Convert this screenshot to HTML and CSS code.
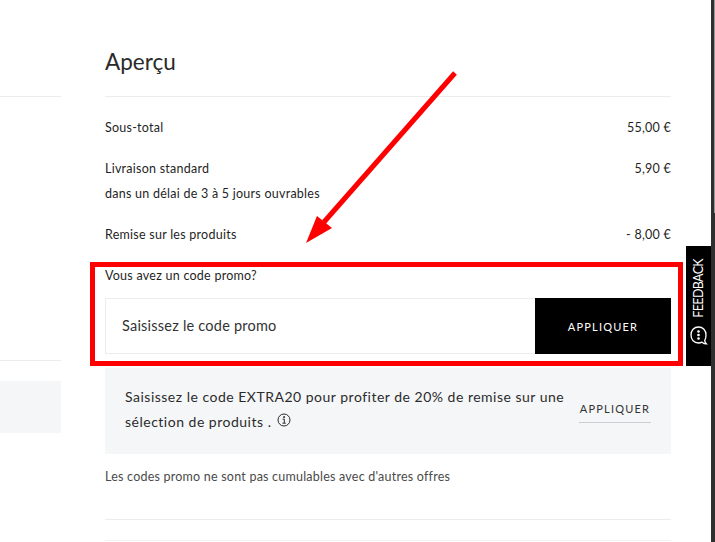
FILE: index.html
```html
<!DOCTYPE html>
<html lang="fr">
<head>
<meta charset="utf-8">
<title>Aperçu</title>
<link rel="stylesheet" href="styles.css">
</head>
<body>
<div class="page">
  <aside class="left">
    <div class="left-rule-a"></div>
    <div class="left-rule-b"></div>
    <div class="left-block"></div>
  </aside>
  <main class="summary">
    <h1 class="title">Aperçu</h1>
    <div class="rows">
      <div class="row row-first"><span>Sous-total</span><span>55,00 €</span></div>
      <div class="row row-ship"><div><div>Livraison standard</div><div class="delay">dans un délai de 3 à 5 jours ouvrables</div></div><span>5,90 €</span></div>
      <div class="row row-disc"><span>Remise sur les produits</span><span>- 8,00 €</span></div>
    </div>
    <p class="promo-label">Vous avez un code promo?</p>
    <form class="promo-form">
      <div class="promo-input">Saisissez le code promo</div>
      <button class="promo-btn" type="button">APPLIQUER</button>
    </form>
    <div class="offer">
      <p class="offer-text">Saisissez le code EXTRA20 pour profiter de 20% de remise sur une sélection de produits .
        <svg class="info" viewBox="0 0 14 14" width="14" height="14" aria-hidden="true"><circle cx="7" cy="7" r="6" fill="none" stroke="#2b2b2b" stroke-width="1"/><path d="M5.600 6.200H7.300V10M5.400 10.200H8.800M6.600 3.600H7.600V4.600H6.600Z" fill="none" stroke="#2b2b2b" stroke-width="1"/></svg>
      </p>
      <a class="offer-link">APPLIQUER</a>
    </div>
    <p class="note">Les codes promo ne sont pas cumulables avec d'autres offres</p>
    <div class="end-rule-a"></div>
    <div class="end-rule-b"></div>
  </main>
  <div class="scrollbar"><div class="thumb"></div></div>
</div>

<svg class="arrow" width="170" height="190" viewBox="0 0 170 190" aria-hidden="true">
  <path d="M155 13 L24 162" fill="none" stroke="#ff0000" stroke-width="5"/>
  <path d="M6 183 L17 156 L32 168 Z" fill="#ff0000"/>
</svg>
<div class="highlight"></div>
<div class="feedback">
  <span class="feedback-text">FEEDBACK</span>
  <svg class="feedback-icon" width="18" height="20" viewBox="0 0 18 20" aria-hidden="true"><path d="M8.500 1C4 1 1 4.300 1 9s3 8 7.500 8c1.300 0 2.500-.3 3.500-.8 1.200 1 2.700 1.700 4.500 1.700-1-.9-1.700-2.100-1.800-3.300C15.500 13 16 11.200 16 9 16 4.300 13 1 8.500 1Z" fill="none" stroke="#fff" stroke-width="1.300"/><circle cx="8.500" cy="5.500" r="1.300" fill="#fff"/><circle cx="8.500" cy="9" r="1.300" fill="#fff"/><circle cx="8.500" cy="12.500" r="1.300" fill="#fff"/></svg>
</div>
</body>
</html>
```

FILE: styles.css
```css
* { box-sizing: border-box; }
html, body { margin: 0; padding: 0; height: 542px; overflow: hidden; background: #fff; }
body { font-family: "Lato", "Open Sans", sans-serif; color: #1f1f1f; position: relative; }
.page { display: flex; width: 715px; height: 542px; overflow: hidden; }
.left { width: 61px; flex: none; padding-top: 96px; }
.left-rule-a { height: 1px; background: #ececec; }
.left-rule-b { height: 1px; background: #ececec; margin-top: 263px; }
.left-block { height: 52px; background: #f5f6f8; margin-top: 20px; }
.summary { width: 566px; margin-left: 44px; flex: none; }
.title { margin: 0; height: 97px; padding-top: 48px; font-size: 22.500px; line-height: 28px; font-weight: 400; color: #2a2a2a; border-bottom: 1px solid #ececec; }
.rows { font-size: 12.500px; line-height: 25px; letter-spacing: .25px; }
.row { display: flex; justify-content: space-between; align-items: flex-start; }
.row-first { padding-top: 18px; }
.row-ship { margin-top: 16px; }
.row-disc { margin-top: 16px; }
.promo-label { margin: 21px 0 0; font-size: 12.500px; line-height: 16px; letter-spacing: .25px; }
.promo-form { display: flex; height: 56px; margin-top: 14px; }
.promo-input { flex: 1; border: 1px solid #ececec; border-right: 0; padding-left: 16px; font-size: 14.500px; line-height: 54px; color: #333; letter-spacing: .22px; }
.promo-btn { width: 136px; flex: none; border: 0; background: #000; color: #fff; font: inherit; font-size: 11px; letter-spacing: 1.200px; padding: 0; }
.offer { display: flex; justify-content: space-between; align-items: center; height: 86px; margin-top: 14px; padding: 0 20px 5px; background: #f5f6f8; }
.offer-text { margin: 0; width: 446px; font-size: 14px; line-height: 25px; color: #2b2b2b; letter-spacing: .5px; }
.info { vertical-align: 0; margin-left: 1px; }
.offer-link { display: block; width: 72px; padding-bottom: 6px; margin-top: 8px; font-size: 11px; line-height: 14px; letter-spacing: 1.200px; text-align: center; color: #333; border-bottom: 1px solid #ccced2; }
.note { margin: 14px 0 0; font-size: 12.500px; line-height: 18px; color: #4a4a4a; letter-spacing: .22px; }
.end-rule-a { height: 1px; background: #ececec; margin-top: 33px; }
.end-rule-b { height: 1px; background: #f2f2f2; margin-top: 20px; }
.scrollbar { width: 4px; height: 542px; margin-left: 40px; flex: none; background: #2f2f2f; }
.thumb { width: 1px; height: 213px; margin-left: 3px; background: #999; }
.arrow { position: absolute; left: 300px; top: 60px; }
.highlight { position: absolute; left: 90px; top: 262px; width: 593px; height: 104px; border: 5px solid #ff0000; }
.feedback { position: absolute; left: 686px; top: 246px; width: 25px; height: 120px; background: #000; display: flex; flex-direction: column; align-items: center; justify-content: flex-end; padding-bottom: 20px; }
.feedback-text { writing-mode: vertical-rl; transform: rotate(180deg); color: #fff; font-size: 12.500px; line-height: 14px; letter-spacing: -.65px; }
.feedback-icon { margin-top: 8px; }
```
